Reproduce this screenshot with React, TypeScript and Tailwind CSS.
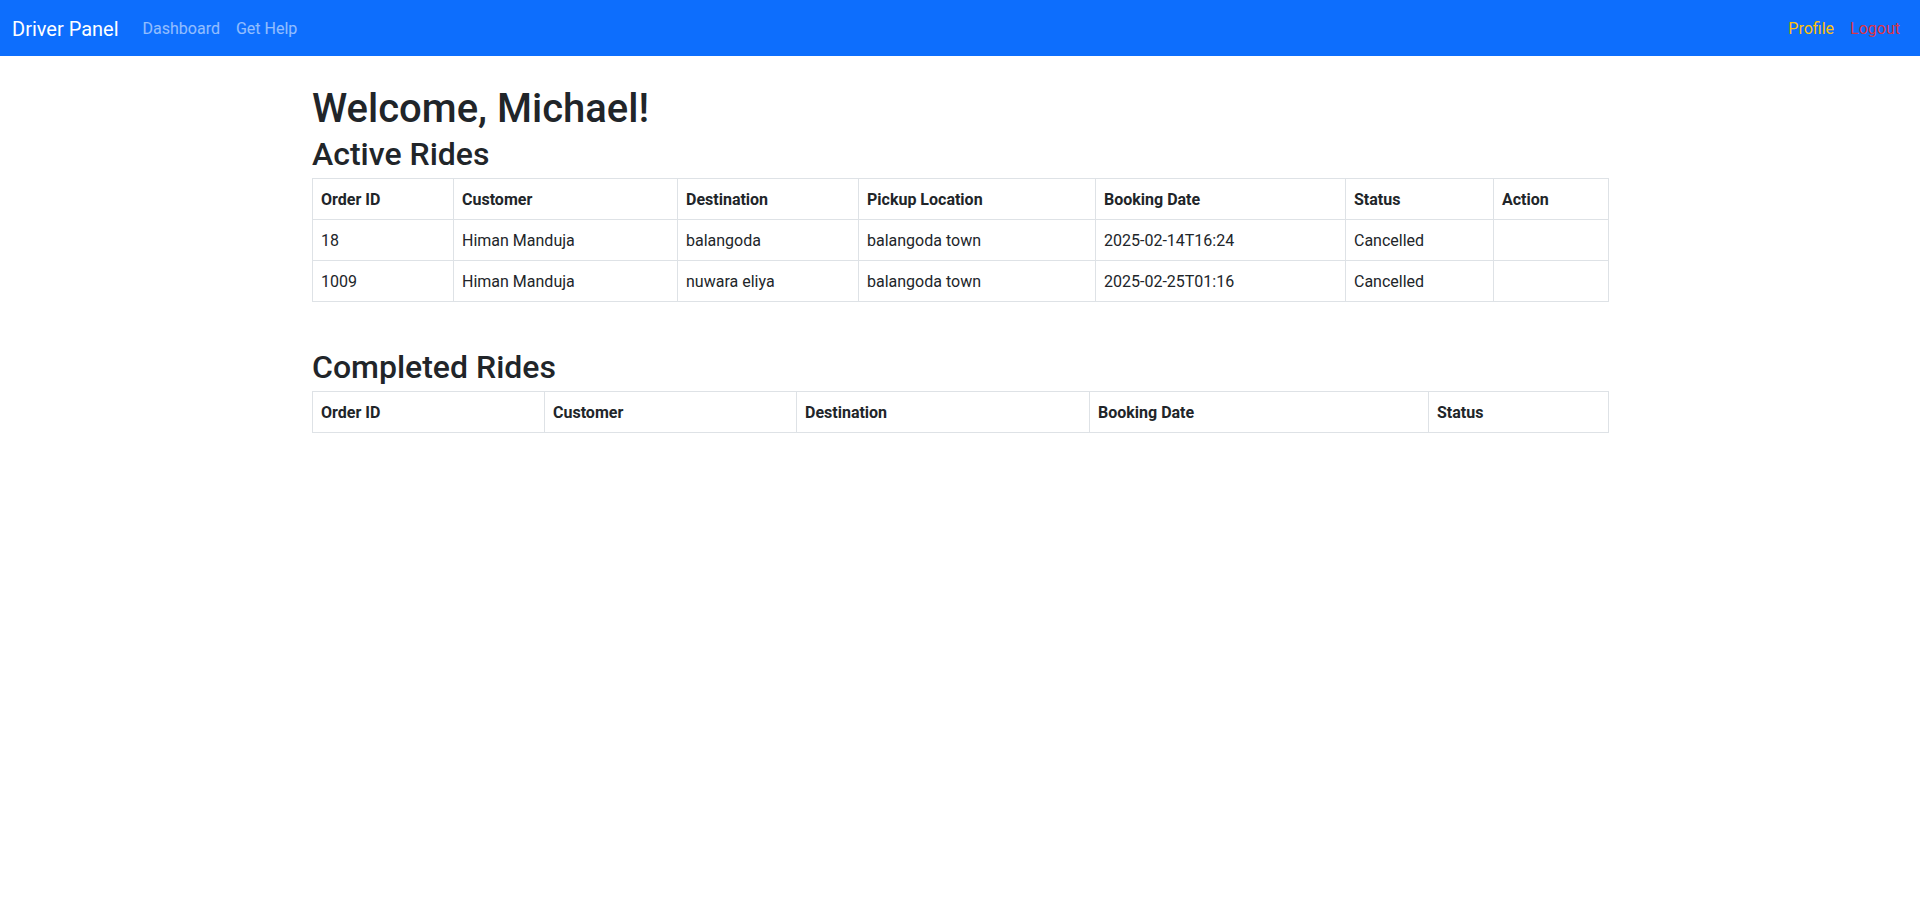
import React from "react";

const activeCols = [
  { label: "Order ID", w: "w-[141px]" },
  { label: "Customer", w: "w-[224px]" },
  { label: "Destination", w: "w-[181px]" },
  { label: "Pickup Location", w: "w-[237px]" },
  { label: "Booking Date", w: "w-[250px]" },
  { label: "Status", w: "w-[148px]" },
  { label: "Action", w: "w-[115px]" },
];

const activeRows = [
  ["18", "Himan Manduja", "balangoda", "balangoda town", "2025-02-14T16:24", "Cancelled", ""],
  ["1009", "Himan Manduja", "nuwara eliya", "balangoda town", "2025-02-25T01:16", "Cancelled", ""],
];

const completedCols = [
  { label: "Order ID", w: "w-[232px]" },
  { label: "Customer", w: "w-[252px]" },
  { label: "Destination", w: "w-[293px]" },
  { label: "Booking Date", w: "w-[339px]" },
  { label: "Status", w: "w-[180px]" },
];

function Table({ cols, rows }: { cols: { label: string; w: string }[]; rows: string[][] }) {
  return (
    <table className="w-full table-fixed border-collapse border border-[#dee2e6] text-[16px] leading-6 text-[#212529]">
      <thead>
        <tr>
          {cols.map((c) => (
            <th key={c.label} className={`${c.w} border border-[#dee2e6] px-2 pb-[7px] pt-[9px] text-left font-bold`}>
              {c.label}
            </th>
          ))}
        </tr>
      </thead>
      <tbody>
        {rows.map((r, i) => (
          <tr key={i}>
            {r.map((v, j) => (
              <td key={j} className="border border-[#dee2e6] px-2 pb-[7px] pt-[9px] font-normal">
                {v}
              </td>
            ))}
          </tr>
        ))}
      </tbody>
    </table>
  );
}

export default function App() {
  return (
    <div className="min-h-screen bg-white font-['Roboto',sans-serif] text-[#212529]">
      <nav className="flex h-14 items-center justify-between bg-[#0d6efd] px-3 pt-[2px]">
        <div className="flex items-center">
          <span className="mr-4 text-[20px] leading-[30px] text-white">Driver Panel</span>
          <a className="px-2 text-[16px] leading-6 text-white/55">Dashboard</a>
          <a className="px-2 text-[16px] leading-6 text-white/55">Get Help</a>
        </div>
        <div className="flex items-center">
          <a className="px-2 text-[16px] leading-6 text-[#ffc107]">Profile</a>
          <a className="px-2 text-[16px] leading-6 text-[#dc3545]">Logout</a>
        </div>
      </nav>
      <main className="mx-auto w-[1320px] px-3 pt-[29px]">
        <h1 className="mb-[2px] text-[40px] font-medium leading-[48px]">Welcome, Michael!</h1>
        <h2 className="mb-[5px] text-[32px] font-medium leading-[38px]">Active Rides</h2>
        <Table cols={activeCols} rows={activeRows} />
        <h2 className="mb-[5px] mt-[46px] text-[32px] font-medium leading-[38px]">Completed Rides</h2>
        <Table cols={completedCols} rows={[]} />
      </main>
    </div>
  );
}
